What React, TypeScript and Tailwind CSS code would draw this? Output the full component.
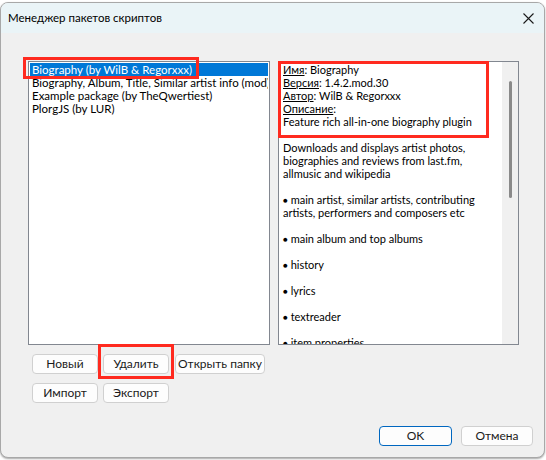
import React from "react";

const packages = [
  "Biography (by WilB & Regorxxx)",
  "Biography, Album, Title, Similar artist info (mod) PlorgJS",
  "Example package (by TheQwertiest)",
  "PlorgJS (by LUR)",
];

const details: { label?: string; value?: string; text?: string; bullet?: boolean }[] = [
  { label: "Имя", value: " Biography" },
  { label: "Версия", value: " 1.4.2.mod.30" },
  { label: "Автор", value: " WilB & Regorxxx" },
  { label: "Описание", value: "" },
  { text: "Feature rich all-in-one biography plugin" },
  { text: "" },
  { text: "Downloads and displays artist photos," },
  { text: "biographies and reviews from last.fm," },
  { text: "allmusic and wikipedia" },
  { text: "" },
  { text: "main artist, similar artists, contributing", bullet: true },
  { text: "artists, performers and composers etc" },
  { text: "" },
  { text: "main album and top albums", bullet: true },
  { text: "" },
  { text: "history", bullet: true },
  { text: "" },
  { text: "lyrics", bullet: true },
  { text: "" },
  { text: "textreader", bullet: true },
  { text: "" },
  { text: "item properties", bullet: true },
];

const Button = ({
  children,
  className = "",
  primary = false,
}: {
  children: React.ReactNode;
  className?: string;
  primary?: boolean;
}) => (
  <div
    className={`flex items-center justify-center h-[20px] rounded-[4px] bg-[#fdfdfd] text-[12px] text-[#1a1a1a] border ${
      primary ? "border-[#0067c0]" : "border-[#d0d0d0]"
    } ${className}`}
  >
    {children}
  </div>
);

export default function App() {
  return (
    <div
      className="w-[546px] h-[460px] bg-white pt-[2px] overflow-hidden"
      style={{ fontFamily: 'Lato, "Liberation Sans", sans-serif' }}
    >
      <div className="relative w-[545px] h-[456px] rounded-[8px] border border-[#a8a8a8] bg-[#f0f0f0] overflow-hidden flex flex-col shadow-[0_1px_2px_rgba(0,0,0,0.35)]">
        {/* title bar */}
        <div className="h-[30px] shrink-0 bg-[#eaf4f7] flex items-center justify-between pl-[7px] pr-[8px]">
          <span className="text-[11.5px] text-black">Менеджер пакетов скриптов</span>
          <svg width="11" height="11" viewBox="0 0 11 11" className="mr-[2px]">
            <path d="M0.5 0.5 L10.5 10.5 M10.5 0.5 L0.5 10.5" stroke="#1a1a1a" strokeWidth="1.1" />
          </svg>
        </div>

        <div className="flex-1 flex flex-col pl-[27px] pr-[11px] pt-[28px] pb-[11px]">
          <div className="flex gap-[8px]">
            {/* package list */}
            <div className="relative w-[242px] h-[284px] bg-white border border-[#828790] p-[1px] text-[11.5px] leading-[13px] text-black">
              {packages.map((p, i) => (
                <div
                  key={p}
                  className={`h-[13px] pl-[2px] whitespace-nowrap overflow-hidden ${
                    i === 0 ? "bg-[#0078d7] text-white" : ""
                  }`}
                >
                  {p}
                </div>
              ))}
              <div className="absolute left-[-6px] top-[-5px] w-[176px] h-[22px] border-[3px] border-[#ff2a1f]" />
            </div>

            {/* package details */}
            <div className="relative w-[241px] h-[284px] bg-white border border-[#828790] flex">
              <div className="flex-1 overflow-hidden pl-[4px] pt-[1px] text-[11px] leading-[13px] text-black">
                {details.map((d, i) => (
                  <div key={i} className="h-[13px] whitespace-nowrap">
                    {d.label ? (
                      <>
                        <span className="underline">{d.label}</span>:{d.value}
                      </>
                    ) : d.bullet ? (
                      <>
                        <span className="text-[8px] align-[1px]">●</span> {d.text}
                      </>
                    ) : (
                      d.text
                    )}
                  </div>
                ))}
              </div>
              <div className="w-[16px] bg-[#f0f0f0] flex justify-center pt-[19px]">
                <div className="w-[3px] h-[117px] bg-[#8a8a8a] rounded-[2px]" />
              </div>
              <div className="absolute left-[-1px] top-[-1px] w-[211px] h-[77px] border-[3px] border-[#ff2a1f]" />
            </div>
          </div>

          {/* list actions */}
          <div className="flex flex-col gap-[9px] pl-[4px] mt-[9px]">
            <div className="flex">
              <Button className="w-[66px]">Новый</Button>
              <div className="relative ml-[5px]">
                <Button className="w-[66px]">Удалить</Button>
                <div className="absolute left-[-5px] top-[-10px] w-[76px] h-[35px] border-[3px] border-[#ff2a1f]" />
              </div>
              <Button className="w-[90px] ml-[6px]">Открыть папку</Button>
            </div>
            <div className="flex gap-[5px]">
              <Button className="w-[66px]">Импорт</Button>
              <Button className="w-[66px]">Экспорт</Button>
            </div>
          </div>

          <div className="mt-auto flex justify-end gap-[9px]">
            <Button primary className="w-[73px]">OK</Button>
            <Button className="w-[72px]">Отмена</Button>
          </div>
        </div>
      </div>
    </div>
  );
}
